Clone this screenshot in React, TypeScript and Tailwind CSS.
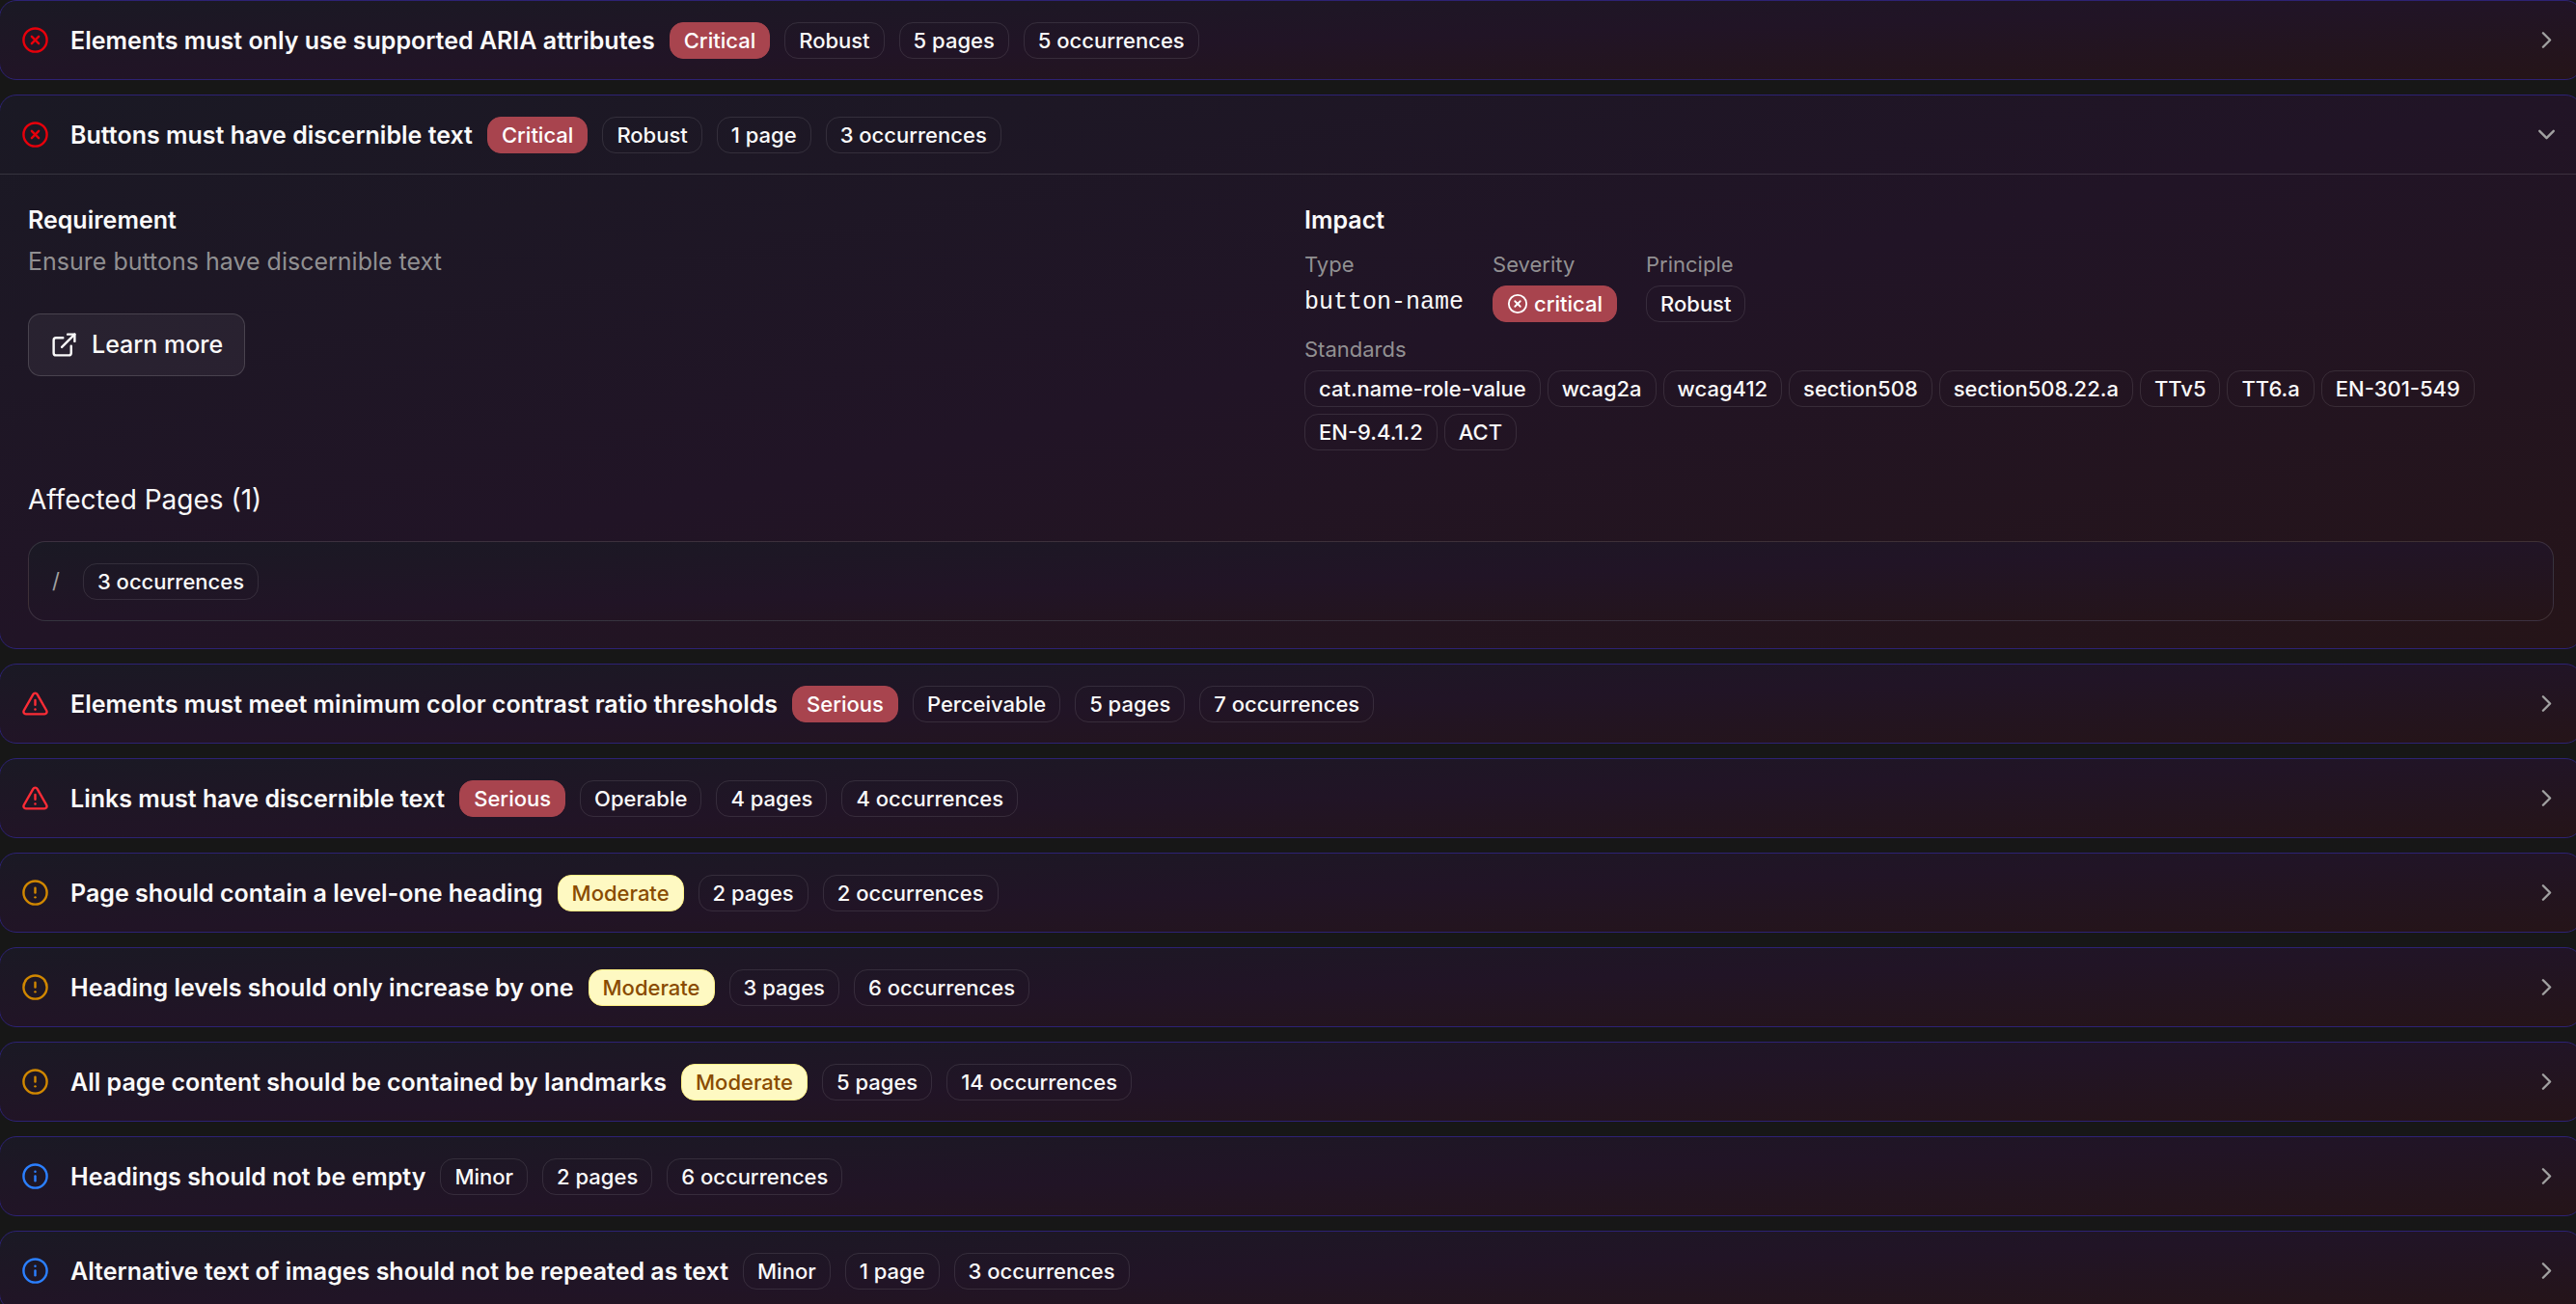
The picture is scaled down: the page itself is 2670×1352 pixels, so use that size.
import { useState } from "react";
import { ChevronRight, CircleAlert, CircleX, ExternalLink, Info, TriangleAlert } from "lucide-react";

type Severity = "Critical" | "Serious" | "Moderate" | "Minor";

interface Issue {
  title: string;
  severity: Severity;
  tags: string[];
}

const issues: Issue[] = [
  { title: "Elements must only use supported ARIA attributes", severity: "Critical", tags: ["Robust", "5 pages", "5 occurrences"] },
  { title: "Buttons must have discernible text", severity: "Critical", tags: ["Robust", "1 page", "3 occurrences"] },
  { title: "Elements must meet minimum color contrast ratio thresholds", severity: "Serious", tags: ["Perceivable", "5 pages", "7 occurrences"] },
  { title: "Links must have discernible text", severity: "Serious", tags: ["Operable", "4 pages", "4 occurrences"] },
  { title: "Page should contain a level-one heading", severity: "Moderate", tags: ["2 pages", "2 occurrences"] },
  { title: "Heading levels should only increase by one", severity: "Moderate", tags: ["3 pages", "6 occurrences"] },
  { title: "All page content should be contained by landmarks", severity: "Moderate", tags: ["5 pages", "14 occurrences"] },
  { title: "Headings should not be empty", severity: "Minor", tags: ["2 pages", "6 occurrences"] },
  { title: "Alternative text of images should not be repeated as text", severity: "Minor", tags: ["1 page", "3 occurrences"] },
];

const standards = [
  "cat.name-role-value",
  "wcag2a",
  "wcag412",
  "section508",
  "section508.22.a",
  "TTv5",
  "TT6.a",
  "EN-301-549",
  "EN-9.4.1.2",
  "ACT",
];

const surface = "bg-linear-to-br from-[#1a1924] via-[#211426] to-[#251418]";

const badgeTones: Record<Severity | "Outline", string> = {
  Critical: "border-[#a8444e] bg-[#a8444e] text-white",
  Serious: "border-[#a8444e] bg-[#a8444e] text-white",
  Moderate: "border-[#fff085] bg-[#fef9c2] text-[#894b00]",
  Minor: "border-white/10 text-neutral-50",
  Outline: "border-white/10 text-neutral-50",
};

function Badge({ tone = "Outline", children }: { tone?: Severity | "Outline"; children: React.ReactNode }) {
  return (
    <span
      className={`inline-flex h-[38px] shrink-0 items-center gap-1.5 rounded-[14px] border px-3.5 text-[22px] leading-7 font-medium whitespace-nowrap ${badgeTones[tone]}`}
    >
      {children}
    </span>
  );
}

function SeverityIcon({ severity }: { severity: Severity }) {
  const size = "size-[29px] shrink-0";
  if (severity === "Critical") return <CircleX className={`${size} text-[#e7000b]`} aria-hidden />;
  if (severity === "Serious") return <TriangleAlert className={`${size} text-[#fb2c36]`} aria-hidden />;
  if (severity === "Moderate") return <CircleAlert className={`${size} text-[#d08700]`} aria-hidden />;
  return <Info className={`${size} text-[#2b7fff]`} aria-hidden />;
}

function IssueDetails() {
  return (
    <div className="border-t border-white/12 px-[29px] py-7">
      <div className="grid grid-cols-2 gap-7">
        <section>
          <h3 className="text-[25px] leading-[38px] font-semibold">Requirement</h3>
          <p className="mt-1.5 text-[25px] leading-9 text-neutral-400/90">Ensure buttons have discernible text</p>
          <a
            href="#learn-more"
            className="mt-9 inline-flex h-[65px] items-center gap-3.5 rounded-[13px] border border-white/15 bg-white/5 px-[22px] text-[25px] font-medium"
          >
            <ExternalLink className="size-[29px]" aria-hidden />
            Learn more
          </a>
        </section>
        <section>
          <h3 className="text-[25px] leading-[38px] font-semibold">Impact</h3>
          <dl className="mt-2.5 flex gap-[30px] text-[22px]">
            <div>
              <dt className="leading-[34px] text-neutral-400/90">Type</dt>
              <dd className="font-[Liberation_Mono,monospace] text-[25px] leading-[46px]">button-name</dd>
            </div>
            <div>
              <dt className="mb-[5px] leading-[34px] text-neutral-400/90">Severity</dt>
              <dd className="flex">
                <Badge tone="Critical">
                  <CircleX className="size-[22px]" aria-hidden />
                  critical
                </Badge>
              </dd>
            </div>
            <div>
              <dt className="mb-[5px] leading-[34px] text-neutral-400/90">Principle</dt>
              <dd className="flex">
                <Badge>Robust</Badge>
              </dd>
            </div>
          </dl>
          <h4 className="mt-2 text-[22px] leading-[34px] text-neutral-400/90">Standards</h4>
          <ul className="mt-[5px] flex flex-wrap gap-[7px]">
            {standards.map((name) => (
              <li key={name} className="flex">
                <Badge>{name}</Badge>
              </li>
            ))}
          </ul>
        </section>
      </div>
      <h3 className="mt-7 text-[28px] leading-[46px]">Affected Pages (1)</h3>
      <div className={`mt-5 flex h-[83px] items-center gap-6 rounded-[18px] border border-white/12 px-6 ${surface}`}>
        <span className="text-[22px] text-neutral-400">/</span>
        <Badge>3 occurrences</Badge>
      </div>
    </div>
  );
}

function IssueCard({ issue, initiallyOpen }: { issue: Issue; initiallyOpen: boolean }) {
  const [open, setOpen] = useState(initiallyOpen);
  return (
    <article className={`rounded-[18px] border border-[#2d2274] ${surface}`}>
      <button
        type="button"
        aria-expanded={open}
        onClick={() => setOpen(!open)}
        className="flex h-[81px] w-full items-center gap-[15px] px-[22px] text-left"
      >
        <SeverityIcon severity={issue.severity} />
        <span className="ml-[7px] text-[25px] leading-9 font-semibold">{issue.title}</span>
        <Badge tone={issue.severity}>{issue.severity}</Badge>
        {issue.tags.map((tag) => (
          <Badge key={tag}>{tag}</Badge>
        ))}
        <ChevronRight className={`ml-auto size-[29px] text-neutral-400 ${open ? "rotate-90" : ""}`} aria-hidden />
      </button>
      {open && <IssueDetails />}
    </article>
  );
}

export default function App() {
  return (
    <main className="flex h-screen flex-col overflow-hidden bg-[#171717] font-[Inter,sans-serif] text-neutral-50">
      <div className="-mr-[7px] -ml-px flex flex-col gap-[15px]">
        {issues.map((issue, index) => (
          <IssueCard key={issue.title} issue={issue} initiallyOpen={index === 1} />
        ))}
      </div>
    </main>
  );
}
